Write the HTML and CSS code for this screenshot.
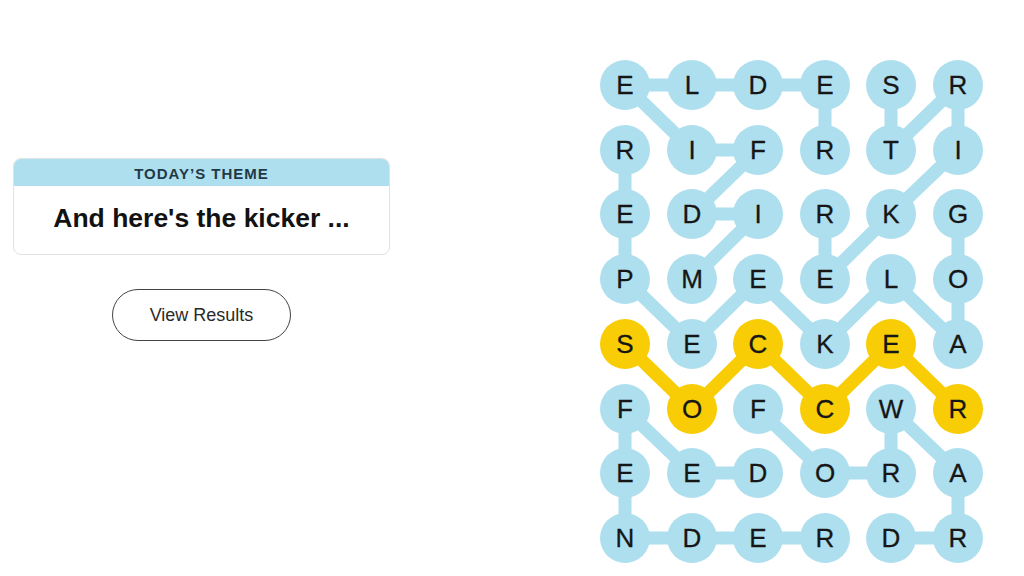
FILE: index.html
```html
<!DOCTYPE html>
<html lang="en">
<head>
<meta charset="utf-8">
<title>Strands</title>
<link rel="stylesheet" href="styles.css">
</head>
<body>
<main class="page">
  <section class="left">
    <div class="theme-card">
      <div class="theme-head">TODAY’S THEME</div>
      <div class="theme-title">And here's the kicker ...</div>
    </div>
    <button class="results-btn">View Results</button>
  </section>
  <section class="board">
    <svg class="grid" width="410" height="526" viewBox="0 0 410 526" xmlns="http://www.w3.org/2000/svg">
      <g class="links">
        <polyline points="102,229 168,164 102,164 168,100 102,100 35,35 102,35 168,35 235,35 235,100"/>
        <polyline points="301,35 301,100 368,35 368,100 301,164 235,229 235,164"/>
        <polyline points="368,164 368,229 368,294 301,229 235,294 168,229 102,294 35,229 35,164 35,100"/>
        <polyline points="168,423 102,423 35,359 35,423 35,488 102,488 168,488 235,488"/>
        <polyline points="168,359 235,423 301,423 301,359 368,423 368,488 301,488"/>
      </g>
      <g class="links span">
        <polyline points="35,294 102,359 168,294 235,359 301,294 368,359"/>
      </g>
      <g class="dots">
        <circle cx="35" cy="35" r="25"/><circle cx="102" cy="35" r="25"/><circle cx="168" cy="35" r="25"/><circle cx="235" cy="35" r="25"/><circle cx="301" cy="35" r="25"/><circle cx="368" cy="35" r="25"/>
        <circle cx="35" cy="100" r="25"/><circle cx="102" cy="100" r="25"/><circle cx="168" cy="100" r="25"/><circle cx="235" cy="100" r="25"/><circle cx="301" cy="100" r="25"/><circle cx="368" cy="100" r="25"/>
        <circle cx="35" cy="164" r="25"/><circle cx="102" cy="164" r="25"/><circle cx="168" cy="164" r="25"/><circle cx="235" cy="164" r="25"/><circle cx="301" cy="164" r="25"/><circle cx="368" cy="164" r="25"/>
        <circle cx="35" cy="229" r="25"/><circle cx="102" cy="229" r="25"/><circle cx="168" cy="229" r="25"/><circle cx="235" cy="229" r="25"/><circle cx="301" cy="229" r="25"/><circle cx="368" cy="229" r="25"/>
        <circle cx="102" cy="294" r="25"/><circle cx="235" cy="294" r="25"/><circle cx="368" cy="294" r="25"/>
        <circle cx="35" cy="359" r="25"/><circle cx="168" cy="359" r="25"/><circle cx="301" cy="359" r="25"/>
        <circle cx="35" cy="423" r="25"/><circle cx="102" cy="423" r="25"/><circle cx="168" cy="423" r="25"/><circle cx="235" cy="423" r="25"/><circle cx="301" cy="423" r="25"/><circle cx="368" cy="423" r="25"/>
        <circle cx="35" cy="488" r="25"/><circle cx="102" cy="488" r="25"/><circle cx="168" cy="488" r="25"/><circle cx="235" cy="488" r="25"/><circle cx="301" cy="488" r="25"/><circle cx="368" cy="488" r="25"/>
      </g>
      <g class="dots span">
        <circle cx="35" cy="294" r="25"/><circle cx="168" cy="294" r="25"/><circle cx="301" cy="294" r="25"/>
        <circle cx="102" cy="359" r="25"/><circle cx="235" cy="359" r="25"/><circle cx="368" cy="359" r="25"/>
      </g>
      <g class="letters">
        <text x="35" y="44">E</text><text x="102" y="44">L</text><text x="168" y="44">D</text><text x="235" y="44">E</text><text x="301" y="44">S</text><text x="368" y="44">R</text>
        <text x="35" y="109">R</text><text x="102" y="109">I</text><text x="168" y="109">F</text><text x="235" y="109">R</text><text x="301" y="109">T</text><text x="368" y="109">I</text>
        <text x="35" y="173">E</text><text x="102" y="173">D</text><text x="168" y="173">I</text><text x="235" y="173">R</text><text x="301" y="173">K</text><text x="368" y="173">G</text>
        <text x="35" y="238">P</text><text x="102" y="238">M</text><text x="168" y="238">E</text><text x="235" y="238">E</text><text x="301" y="238">L</text><text x="368" y="238">O</text>
        <text x="35" y="303">S</text><text x="102" y="303">E</text><text x="168" y="303">C</text><text x="235" y="303">K</text><text x="301" y="303">E</text><text x="368" y="303">A</text>
        <text x="35" y="368">F</text><text x="102" y="368">O</text><text x="168" y="368">F</text><text x="235" y="368">C</text><text x="301" y="368">W</text><text x="368" y="368">R</text>
        <text x="35" y="432">E</text><text x="102" y="432">E</text><text x="168" y="432">D</text><text x="235" y="432">O</text><text x="301" y="432">R</text><text x="368" y="432">A</text>
        <text x="35" y="497">N</text><text x="102" y="497">D</text><text x="168" y="497">E</text><text x="235" y="497">R</text><text x="301" y="497">D</text><text x="368" y="497">R</text>
      </g>
    </svg>
  </section>
</main>
</body>
</html>
```
FILE: styles.css
```css
* { box-sizing: border-box; }
html, body { margin: 0; padding: 0; background: #ffffff; }
body {
  width: 1024px;
  height: 576px;
  overflow: hidden;
  font-family: "Liberation Sans", Arial, sans-serif;
  color: #121212;
}
.page {
  display: flex;
  align-items: flex-start;
  height: 576px;
}
.left {
  width: 377px;
  margin-left: 13px;
  padding-top: 158px;
  display: flex;
  flex-direction: column;
  align-items: center;
}
.theme-card {
  width: 377px;
  height: 97px;
  border: 1px solid #e2e2e2;
  border-radius: 8px;
  overflow: hidden;
  display: flex;
  flex-direction: column;
}
.theme-head {
  height: 27px;
  background: #aedfee;
  color: #1f3a46;
  font-weight: 700;
  font-size: 15px;
  letter-spacing: 1px;
  display: flex;
  align-items: center;
  justify-content: center;
  padding-top: 2px;
}
.theme-title {
  flex: 1;
  display: flex;
  align-items: center;
  justify-content: center;
  font-weight: 700;
  font-size: 26.5px;
  color: #121212;
  padding-bottom: 4px;
}
.results-btn {
  margin-top: 34px;
  width: 179px;
  height: 52px;
  border: 1.5px solid #444444;
  border-radius: 26px;
  background: #ffffff;
  font-family: "Liberation Sans", Arial, sans-serif;
  font-size: 18px;
  color: #2a2a2a;
}
.board {
  margin-left: 200px;
  padding-top: 50px;
}
.grid { display: block; }
.links polyline {
  fill: none;
  stroke: #aedfee;
  stroke-width: 13;
  stroke-linejoin: round;
  stroke-linecap: round;
}
.links.span polyline { stroke: #f8cd05; }
.dots circle { fill: #aedfee; }
.dots.span circle { fill: #f8cd05; }
.letters text {
  font-family: "Liberation Sans", Arial, sans-serif;
  font-size: 26px;
  fill: #161616;
  stroke: #161616;
  stroke-width: 0.3;
  text-anchor: middle;
}
```
